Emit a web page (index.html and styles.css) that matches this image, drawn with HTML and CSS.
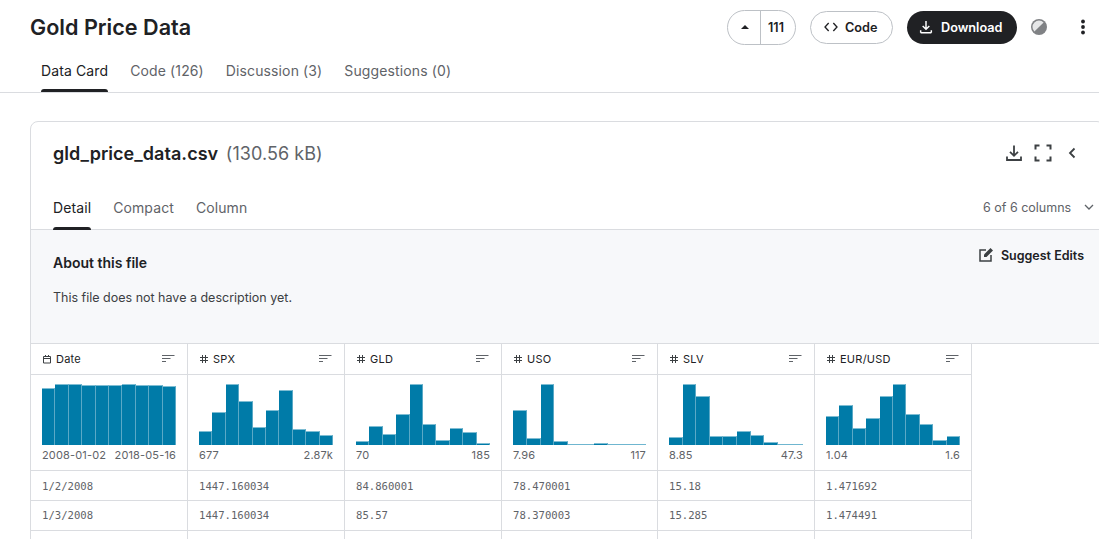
FILE: index.html
```html
<!DOCTYPE html>
<html lang="en">
<head>
<meta charset="utf-8">
<title>Gold Price Data</title>
<link rel="stylesheet" href="styles.css">
</head>
<body>
<header class="top">
  <h1 class="title">Gold Price Data</h1>
  <div class="actions">
    <div class="vote">
      <span class="vote-up"><svg width="14" height="14" viewBox="0 0 14 14"><path d="M3 9 7 5l4 4z" fill="#202124"/></svg></span>
      <span class="vote-count">111</span>
    </div>
    <button class="btn btn-code"><svg width="16" height="16" viewBox="0 0 24 24" fill="none" stroke="#202124" stroke-width="2"><path d="M8.500 6 3 12l5.500 6M15.500 6 21 12l-5.500 6"/></svg>Code</button>
    <button class="btn btn-dark"><svg width="16" height="16" viewBox="0 0 24 24" fill="none" stroke="#fff" stroke-width="2.200"><path d="M12 3v12M7 10.500l5 5 5-5M4 20.500h16"/><path d="M4 17v3.500M20 17v3.500"/></svg>Download</button>
    <svg class="theme" width="18" height="18" viewBox="0 0 18 18"><circle cx="9" cy="9" r="8" fill="#808285"/><path d="M13.600 4.400A6.500 6.500 0 0 0 4.400 13.600z" fill="#e6e7e8"/></svg>
    <svg class="kebab" width="6" height="16" viewBox="0 0 6 16"><circle cx="3" cy="2.500" r="1.900" fill="#202124"/><circle cx="3" cy="8" r="1.900" fill="#202124"/><circle cx="3" cy="13.500" r="1.900" fill="#202124"/></svg>
  </div>
</header>
<nav class="tabs">
  <a class="tab tab-on">Data Card</a>
  <a class="tab">Code (126)</a>
  <a class="tab">Discussion (3)</a>
  <a class="tab">Suggestions (0)</a>
</nav>
<main class="card">
  <div class="card-head">
    <h2 class="file">gld_price_data.csv <span class="size">(130.56 kB)</span></h2>
    <div class="card-tools">
      <svg width="20" height="20" viewBox="0 0 20 20" fill="none" stroke="#3c4043" stroke-width="1.800"><path d="M10 2.500v10M6 8.800l4 4 4-4M3 13.500v3.500h14v-3.500"/></svg>
      <svg width="20" height="20" viewBox="0 0 20 20" fill="none" stroke="#3c4043" stroke-width="2"><path d="M2.500 6.500v-4h4M13.500 2.500h4v4M17.500 13.500v4h-4M6.500 17.500h-4v-4"/></svg>
      <svg width="20" height="20" viewBox="0 0 20 20" fill="none" stroke="#3c4043" stroke-width="1.800"><path d="M12.500 5.500 8 10l4.500 4.500"/></svg>
    </div>
  </div>
  <div class="subtabs">
    <a class="subtab subtab-on">Detail</a>
    <a class="subtab">Compact</a>
    <a class="subtab">Column</a>
    <div class="col-count">6 of 6 columns
      <svg width="12" height="12" viewBox="0 0 12 12" fill="none" stroke="#5f6368" stroke-width="1.300"><path d="M2 4l4 4 4-4"/></svg>
    </div>
  </div>
  <section class="about">
    <div class="about-text">
      <h3 class="about-title">About this file</h3>
      <p class="about-desc">This file does not have a description yet.</p>
    </div>
    <a class="suggest"><svg width="16" height="16" viewBox="0 0 16 16" fill="none" stroke="#3c4043" stroke-width="1.500"><path d="M8 3H2v11h11V8"/><path d="M6 10V7.500L12.500 1l2.500 2.500L8.500 10z" fill="#3c4043" stroke="none"/></svg>Suggest Edits</a>
  </section>
  <div class="table">
    <div class="th"><svg class="ty" width="10" height="10" viewBox="0 0 10 10" fill="none" stroke="#3c4043" stroke-width="1"><path d="M1.500 2.500h7v6.500h-7zM1.500 4.500h7M3.500 1v2M6.500 1v2"/></svg>Date<svg class="sort" width="14" height="10" viewBox="0 0 14 10" fill="none" stroke="#5f6368" stroke-width="1"><path d="M1 1.500h12.500M1 4.500h8.500M1 7.500h4"/></svg></div>
    <div class="th"><svg class="ty" width="10" height="10" viewBox="0 0 10 10" fill="none" stroke="#3c4043" stroke-width="1"><path d="M1 3.500h8M1 6.500h8M3.500 1v8M6.500 1v8"/></svg>SPX<svg class="sort" width="14" height="10" viewBox="0 0 14 10" fill="none" stroke="#5f6368" stroke-width="1"><path d="M1 1.500h12.500M1 4.500h8.500M1 7.500h4"/></svg></div>
    <div class="th"><svg class="ty" width="10" height="10" viewBox="0 0 10 10" fill="none" stroke="#3c4043" stroke-width="1"><path d="M1 3.500h8M1 6.500h8M3.500 1v8M6.500 1v8"/></svg>GLD<svg class="sort" width="14" height="10" viewBox="0 0 14 10" fill="none" stroke="#5f6368" stroke-width="1"><path d="M1 1.500h12.500M1 4.500h8.500M1 7.500h4"/></svg></div>
    <div class="th"><svg class="ty" width="10" height="10" viewBox="0 0 10 10" fill="none" stroke="#3c4043" stroke-width="1"><path d="M1 3.500h8M1 6.500h8M3.500 1v8M6.500 1v8"/></svg>USO<svg class="sort" width="14" height="10" viewBox="0 0 14 10" fill="none" stroke="#5f6368" stroke-width="1"><path d="M1 1.500h12.500M1 4.500h8.500M1 7.500h4"/></svg></div>
    <div class="th"><svg class="ty" width="10" height="10" viewBox="0 0 10 10" fill="none" stroke="#3c4043" stroke-width="1"><path d="M1 3.500h8M1 6.500h8M3.500 1v8M6.500 1v8"/></svg>SLV<svg class="sort" width="14" height="10" viewBox="0 0 14 10" fill="none" stroke="#5f6368" stroke-width="1"><path d="M1 1.500h12.500M1 4.500h8.500M1 7.500h4"/></svg></div>
    <div class="th"><svg class="ty" width="10" height="10" viewBox="0 0 10 10" fill="none" stroke="#3c4043" stroke-width="1"><path d="M1 3.500h8M1 6.500h8M3.500 1v8M6.500 1v8"/></svg>EUR/USD<svg class="sort" width="14" height="10" viewBox="0 0 14 10" fill="none" stroke="#5f6368" stroke-width="1"><path d="M1 1.500h12.500M1 4.500h8.500M1 7.500h4"/></svg></div>

    <div class="hc"><div class="bars"><i style="height:57px"></i><i style="height:61px"></i><i style="height:61px"></i><i style="height:60px"></i><i style="height:60px"></i><i style="height:60px"></i><i style="height:61px"></i><i style="height:60px"></i><i style="height:60px"></i><i style="height:59px"></i></div><div class="range"><span>2008-01-02</span><span>2018-05-16</span></div></div>
    <div class="hc"><div class="bars"><i style="height:14px"></i><i style="height:33px"></i><i style="height:61px"></i><i style="height:44px"></i><i style="height:18px"></i><i style="height:35px"></i><i style="height:55px"></i><i style="height:16px"></i><i style="height:14px"></i><i style="height:10px"></i></div><div class="range"><span>677</span><span>2.87k</span></div></div>
    <div class="hc"><div class="bars"><i style="height:4px"></i><i style="height:19px"></i><i style="height:11px"></i><i style="height:31px"></i><i style="height:61px"></i><i style="height:21px"></i><i style="height:5px"></i><i style="height:17px"></i><i style="height:13px"></i><i style="height:2px"></i></div><div class="range"><span>70</span><span>185</span></div></div>
    <div class="hc"><div class="bars"><i style="height:35px"></i><i style="height:7px"></i><i style="height:61px"></i><i style="height:4px"></i><i class="pale" style="height:1px"></i><i class="pale" style="height:1px"></i><i style="height:2px"></i><i class="pale" style="height:1px"></i><i class="pale" style="height:1px"></i><i class="pale" style="height:1px"></i></div><div class="range"><span>7.96</span><span>117</span></div></div>
    <div class="hc"><div class="bars"><i style="height:8px"></i><i style="height:61px"></i><i style="height:49px"></i><i style="height:9px"></i><i style="height:9px"></i><i style="height:14px"></i><i style="height:10px"></i><i style="height:3px"></i><i class="pale" style="height:1px"></i><i class="pale" style="height:1px"></i></div><div class="range"><span>8.85</span><span>47.3</span></div></div>
    <div class="hc"><div class="bars"><i style="height:29px"></i><i style="height:40px"></i><i style="height:17px"></i><i style="height:27px"></i><i style="height:49px"></i><i style="height:61px"></i><i style="height:31px"></i><i style="height:21px"></i><i style="height:5px"></i><i style="height:9px"></i></div><div class="range"><span>1.04</span><span>1.6</span></div></div>

    <div class="td">1/2/2008</div><div class="td">1447.160034</div><div class="td">84.860001</div><div class="td">78.470001</div><div class="td">15.18</div><div class="td">1.471692</div>
    <div class="td td-up">1/3/2008</div><div class="td td-up">1447.160034</div><div class="td td-up">85.57</div><div class="td td-up">78.370003</div><div class="td td-up">15.285</div><div class="td td-up">1.474491</div>
    <div class="td"></div><div class="td"></div><div class="td"></div><div class="td"></div><div class="td"></div><div class="td"></div>
  </div>
</main>
</body>
</html>
```

FILE: styles.css
```css
* { box-sizing: border-box; }
html, body { margin: 0; height: 539px; overflow: hidden; }
body { font-family: Inter, "Liberation Sans", sans-serif; color: #202124; background: #fff; width: 1099px; }
h1, h2, h3, p { margin: 0; }
button { font: inherit; }

.top { display: flex; justify-content: space-between; align-items: center; height: 54px; padding: 0 0 0 30px; }
.title { font-size: 21.600px; font-weight: 600; line-height: 28px; }
.actions { display: flex; align-items: center; }
.vote { display: flex; width: 69px; height: 35px; border: 1px solid #bdc1c6; border-radius: 18px; font-size: 12.500px; font-weight: 600; align-items: stretch; }
.vote-up { width: 33px; display: flex; align-items: center; justify-content: center; padding-left: 2px; border-right: 1px solid #bdc1c6; }
.vote-count { flex: 1; display: flex; align-items: center; justify-content: center; padding-right: 4px; }
.btn { display: flex; align-items: center; height: 33px; border-radius: 17px; font-size: 12.700px; font-weight: 600; gap: 6px; cursor: pointer; }
.btn-code { width: 83px; margin-left: 14px; background: #fff; border: 1px solid #bdc1c6; color: #202124; padding: 0 0 0 12px; }
.btn-dark { width: 110px; margin-left: 14px; background: #202124; border: 0; color: #fff; padding: 0 0 0 11px; }
.btn-dark svg { margin-right: 1px; }
.theme { margin-left: 13px; }
.kebab { margin-left: 32px; margin-right: 13px; }

.tabs { display: flex; gap: 22px; height: 39px; padding-left: 41px; border-bottom: 1px solid #dadce0; font-size: 14px; letter-spacing: 0.120px; }
.tab { position: relative; line-height: 34px; color: #5f6368; height: 38px; }
.tab-on { color: #202124; }
.tab-on::after { content: ""; position: absolute; left: 0; right: 0; bottom: 0; height: 3px; background: #202124; border-radius: 3px 3px 0 0; }

.card { width: 1075px; margin: 28px 0 0 30px; border: 1px solid #dadce0; border-radius: 8px 8px 0 0; height: 440px; }
.card-head { display: flex; justify-content: space-between; align-items: center; height: 62px; padding: 0 22px 0 22px; }
.file { font-size: 18px; font-weight: 600; letter-spacing: 0.050px; }
.size { font-weight: 400; color: #5f6368; margin-left: 3px; }
.card-tools { display: flex; align-items: center; gap: 9px; }

.subtabs { display: flex; gap: 22px; height: 46px; padding: 0 0 0 22px; border-bottom: 1px solid #dadce0; font-size: 14px; letter-spacing: 0.100px; align-items: flex-start; }
.subtab { position: relative; line-height: 26px; height: 46px; padding-top: 11px; color: #5f6368; }
.subtab-on { color: #202124; }
.subtab-on::after { content: ""; position: absolute; left: 0; right: 0; bottom: 0; height: 3px; background: #202124; border-radius: 3px 3px 0 0; }
.col-count { margin-left: auto; display: flex; align-items: center; gap: 12px; font-size: 12.500px; letter-spacing: 0; color: #5f6368; height: 46px; width: 121px; white-space: nowrap; }

.about { display: flex; justify-content: space-between; height: 114px; background: #f7f8fa; border-bottom: 1px solid #dadce0; padding: 0 20px 0 22px; }
.about-title { font-size: 14px; font-weight: 600; line-height: 20px; margin-top: 23px; }
.about-desc { font-size: 12.500px; line-height: 18px; margin-top: 16px; color: #3c4043; }
.suggest { display: flex; align-items: center; gap: 7px; height: 20px; margin-top: 15px; font-size: 12.500px; font-weight: 600; }

.table { display: grid; grid-template-columns: 157px 157px 157px 156px 157px 157px; width: 941px; grid-template-rows: 31px 96px 30px 30px 30px; }
.th, .hc, .td { border-right: 1px solid #dadce0; border-bottom: 1px solid #dadce0; padding: 0 11px; min-width: 0; }
.th { display: flex; align-items: center; font-size: 11px; font-weight: 400; gap: 3px; color: #202124; letter-spacing: 0.250px; }
.ty { margin-right: 1px; }
.sort { margin-left: auto; margin-right: 1px; }
.hc { padding-top: 9px; }
.bars { display: flex; align-items: flex-end; height: 61px; }
.bars i { flex: 1; background: #007ba8; border-top: 1px solid #7fbdd3; border-right: 1px solid #5aa9c6; }
.bars .pale { background: #6fb6d0; border: 0; }
.range { display: flex; justify-content: space-between; font-size: 11px; line-height: 14px; margin-top: 3px; color: #5f6368; letter-spacing: 0.150px; white-space: nowrap; }
.td { font-family: "DejaVu Sans Mono", "Liberation Mono", monospace; font-size: 10.600px; line-height: 30px; color: #5f6368; }
.td-up { line-height: 28px; }
```
